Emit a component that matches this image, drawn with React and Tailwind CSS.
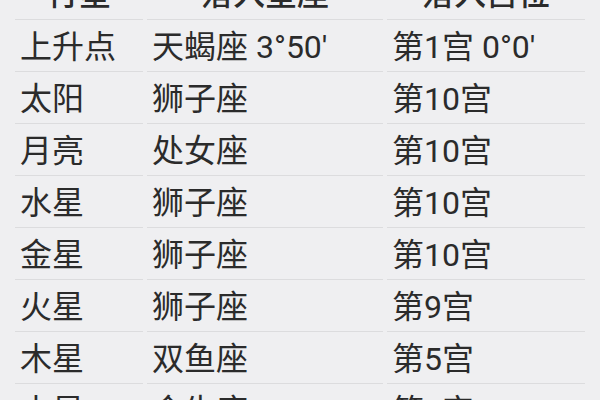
const rows = [
  ["上升点", "天蝎座 3°50'", "第1宫 0°0'"],
  ["太阳", "狮子座", "第10宫"],
  ["月亮", "处女座", "第10宫"],
  ["水星", "狮子座", "第10宫"],
  ["金星", "狮子座", "第10宫"],
  ["火星", "狮子座", "第9宫"],
  ["木星", "双鱼座", "第5宫"],
  ["土星", "金牛座", "第4宫"],
];

export default function App() {
  return (
    <div
      className="w-[600px] h-[400px] overflow-hidden bg-[#efeff1] text-[#2b2b2b]"
      style={{ fontFamily: '"Roboto", "Noto Sans CJK SC", sans-serif' }}
    >
      <div className="mt-[-32px] px-[15px]">
        <div className="grid grid-cols-[130px_240px_200px] h-[52px] text-[32px] font-medium">
          <div className="flex items-center justify-center border-b border-[#dcdcde] mr-[2px]">行星</div>
          <div className="flex items-center justify-center border-b border-[#dcdcde] mx-[2px]">落入星座</div>
          <div className="flex items-center justify-center border-b border-[#dcdcde] ml-[2px]">落入宫位</div>
        </div>
        {rows.map((r, i) => (
          <div key={i} className="grid grid-cols-[130px_240px_200px] h-[52px] text-[32px] leading-none">
            <div className="flex items-center pl-[5px] pt-[2px] border-b border-[#dcdcde] mr-[2px]">{r[0]}</div>
            <div className="flex items-center pl-[5px] pt-[2px] border-b border-[#dcdcde] mx-[2px]">{r[1]}</div>
            <div className="flex items-center pl-[5px] pt-[2px] border-b border-[#dcdcde] ml-[2px]">{r[2]}</div>
          </div>
        ))}
      </div>
    </div>
  );
}
